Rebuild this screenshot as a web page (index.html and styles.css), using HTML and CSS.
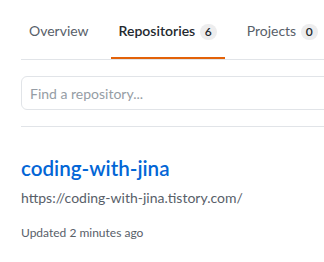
FILE: index.html
```html
<!DOCTYPE html>
<html lang="en">
<head>
  <meta charset="UTF-8">
  <title>Repositories</title>
  <link rel="stylesheet" href="styles.css">
</head>
<body>
  <div class="page">
    <nav class="tabs">
      <a class="tab" href="#">Overview</a>
      <a class="tab selected" href="#">Repositories <span class="counter">6</span></a>
      <a class="tab" href="#">Projects <span class="counter">0</span></a>
    </nav>

    <div class="filter-bar">
      <input type="text" class="search" placeholder="Find a repository...">
    </div>

    <ul class="repo-list">
      <li class="repo">
        <h3 class="repo-name"><a href="#">coding-with-jina</a></h3>
        <p class="repo-desc">https://coding-with-jina.tistory.com/</p>
        <div class="repo-meta">Updated 2 minutes ago</div>
      </li>
    </ul>
  </div>
</body>
</html>
```

FILE: styles.css
```css
body {
  font-family: "Segoe UI", Lato, "Liberation Sans", sans-serif;
  background: #fff;
  color: #24292e;
  margin: 0;
  overflow: hidden;
}

.page {
  padding-left: 21px;
  width: 600px;
}

.tabs {
  display: flex;
  padding-top: 5px;
  border-bottom: 1px solid #e1e4e8;
}

.tab {
  padding: 16px 8px 16px;
  margin-right: 14px;
  font-size: 14px;
  line-height: 20px;
  color: #586069;
  text-decoration: none;
  border-bottom: 2px solid transparent;
  white-space: nowrap;
}

.tab.selected {
  color: #24292e;
  font-weight: 600;
  border-bottom-color: #e36209;
}

.counter {
  display: inline-block;
  margin-left: 1px;
  padding: 2px 5px;
  font-size: 12px;
  font-weight: 600;
  line-height: 1;
  color: #24292e;
  background: rgba(27, 31, 35, 0.08);
  border-radius: 20px;
}

.filter-bar {
  padding: 16px 0;
  border-bottom: 1px solid #e1e4e8;
}

.search {
  box-sizing: border-box;
  width: 400px;
  height: 34px;
  padding: 5px 8px;
  font-family: inherit;
  font-size: 14px;
  color: #24292e;
  border: 1px solid #e1e4e8;
  border-radius: 6px;
  outline: none;
}

.search::placeholder {
  color: #959da5;
}

.repo-list {
  list-style: none;
  margin: 0;
  padding: 0;
}

.repo {
  padding: 26px 0;
}

.repo-name {
  margin: 0 0 4px;
  font-size: 20.6px;
  font-weight: 600;
  line-height: 30px;
}

.repo-name a {
  color: #0366d6;
  text-decoration: none;
}

.repo-desc {
  margin: 0;
  font-size: 14px;
  line-height: 1.5;
  color: #586069;
}

.repo-meta {
  margin-top: 16px;
  font-size: 12px;
  line-height: 1.5;
  color: #586069;
}
```
